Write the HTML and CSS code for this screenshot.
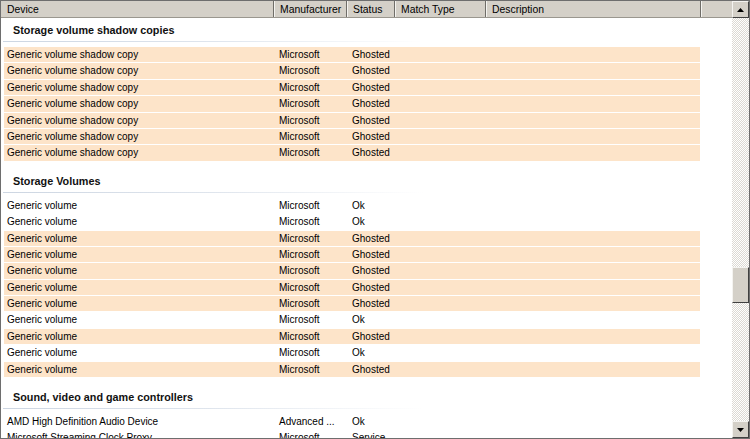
FILE: index.html
```html
<!DOCTYPE html>
<html>
<head>
<meta charset="utf-8">
<link rel="stylesheet" href="styles.css">
</head>
<body>
<div class="window">
  <div class="list">
    <div class="header">
      <div class="hcell">Device</div>
      <div class="hcell">Manufacturer</div>
      <div class="hcell">Status</div>
      <div class="hcell">Match Type</div>
      <div class="hcell">Description</div>
      <div class="hcell filler"></div>
    </div>
    <div class="body">
      <div class="group-head first"><div class="group-title">Storage volume shadow copies</div><div class="group-line"></div></div>
      <div class="row ghost"><span>Generic volume shadow copy</span><span>Microsoft</span><span>Ghosted</span><span></span><span></span></div>
      <div class="row ghost"><span>Generic volume shadow copy</span><span>Microsoft</span><span>Ghosted</span><span></span><span></span></div>
      <div class="row ghost"><span>Generic volume shadow copy</span><span>Microsoft</span><span>Ghosted</span><span></span><span></span></div>
      <div class="row ghost"><span>Generic volume shadow copy</span><span>Microsoft</span><span>Ghosted</span><span></span><span></span></div>
      <div class="row ghost"><span>Generic volume shadow copy</span><span>Microsoft</span><span>Ghosted</span><span></span><span></span></div>
      <div class="row ghost"><span>Generic volume shadow copy</span><span>Microsoft</span><span>Ghosted</span><span></span><span></span></div>
      <div class="row ghost"><span>Generic volume shadow copy</span><span>Microsoft</span><span>Ghosted</span><span></span><span></span></div>

      <div class="group-head"><div class="group-title">Storage Volumes</div><div class="group-line"></div></div>
      <div class="row"><span>Generic volume</span><span>Microsoft</span><span>Ok</span><span></span><span></span></div>
      <div class="row"><span>Generic volume</span><span>Microsoft</span><span>Ok</span><span></span><span></span></div>
      <div class="row ghost"><span>Generic volume</span><span>Microsoft</span><span>Ghosted</span><span></span><span></span></div>
      <div class="row ghost"><span>Generic volume</span><span>Microsoft</span><span>Ghosted</span><span></span><span></span></div>
      <div class="row ghost"><span>Generic volume</span><span>Microsoft</span><span>Ghosted</span><span></span><span></span></div>
      <div class="row ghost"><span>Generic volume</span><span>Microsoft</span><span>Ghosted</span><span></span><span></span></div>
      <div class="row ghost"><span>Generic volume</span><span>Microsoft</span><span>Ghosted</span><span></span><span></span></div>
      <div class="row"><span>Generic volume</span><span>Microsoft</span><span>Ok</span><span></span><span></span></div>
      <div class="row ghost"><span>Generic volume</span><span>Microsoft</span><span>Ghosted</span><span></span><span></span></div>
      <div class="row"><span>Generic volume</span><span>Microsoft</span><span>Ok</span><span></span><span></span></div>
      <div class="row ghost"><span>Generic volume</span><span>Microsoft</span><span>Ghosted</span><span></span><span></span></div>

      <div class="group-head"><div class="group-title">Sound, video and game controllers</div><div class="group-line"></div></div>
      <div class="row"><span>AMD High Definition Audio Device</span><span>Advanced ...</span><span>Ok</span><span></span><span></span></div>
      <div class="row"><span>Microsoft Streaming Clock Proxy</span><span>Microsoft</span><span>Service</span><span></span><span></span></div>
    </div>
  </div>
  <div class="scrollbar">
    <div class="sbtn"><svg width="7" height="4" viewBox="0 0 7 4"><path d="M3.5 0 L7 4 L0 4 Z" fill="#000"/></svg></div>
    <div class="track">
      <div class="thumb"></div>
    </div>
    <div class="sbtn"><svg width="7" height="4" viewBox="0 0 7 4"><path d="M0 0 L7 0 L3.5 4 Z" fill="#000"/></svg></div>
  </div>
</div>
</body>
</html>
```

FILE: styles.css
```css
html, body {
  margin: 0;
  padding: 0;
  background: #fff;
}

.window {
  width: 750px;
  height: 439px;
  box-sizing: border-box;
  border: 1px solid #6e6e6e;
  display: flex;
  overflow: hidden;
  font-family: "Liberation Sans", Arial, sans-serif;
  font-size: 10px;
  color: #000;
}

.list {
  flex: 1;
  display: flex;
  flex-direction: column;
  overflow: hidden;
  min-width: 0;
}

.header {
  display: grid;
  grid-template-columns: 273px 73px 48px 91px 215px 1fr;
  height: 17px;
  flex: none;
  background: #d4d0c8;
  border-bottom: 1px solid #9a978f;
  box-sizing: border-box;
}

.hcell {
  padding-left: 6px;
  padding-top: 1px;
  line-height: 16px;
  font-size: 10.4px;
  border-right: 1px solid #6f6d68;
  box-shadow: inset 1px 0 0 #f4f3f0;
  white-space: nowrap;
  overflow: hidden;
}

.hcell:first-child {
  box-shadow: none;
}

.hcell.filler {
  border-right: none;
}

.body {
  flex: 1;
  overflow: hidden;
}

.group-head {
  height: 36px;
  padding-top: 12px;
  box-sizing: border-box;
}

.group-head.first {
  height: 29px;
  padding-top: 5px;
}

.group-title {
  height: 14px;
  line-height: 14px;
  padding-left: 12px;
  font-weight: bold;
  font-size: 10.8px;
  color: #111;
  margin-bottom: 4px;
}

.group-line {
  height: 1px;
  margin-left: 2px;
  width: 420px;
  background: linear-gradient(to right, #cdd6e2 0%, #dfe5ed 50%, rgba(255,255,255,0) 100%);
}

.row {
  display: grid;
  grid-template-columns: 270px 73px 48px 91px 1fr;
  margin-left: 3px;
  width: 696px;
  height: 16.4px;
  box-sizing: border-box;
  border-bottom: 1px solid #fff;
  line-height: 16.4px;
  white-space: nowrap;
}

.row.ghost {
  background: #fde4c9;
}

.row span {
  padding-left: 5px;
  overflow: hidden;
}

.row span:first-child {
  padding-left: 3px;
}

.scrollbar {
  width: 17px;
  flex: none;
  display: flex;
  flex-direction: column;
}

.sbtn {
  height: 17px;
  flex: none;
  box-sizing: border-box;
  background: #d4d0c8;
  border-top: 1px solid #f4f3f0;
  border-left: 1px solid #f4f3f0;
  border-right: 1px solid #404040;
  border-bottom: 1px solid #404040;
  display: flex;
  align-items: center;
  justify-content: center;
}

.track {
  flex: 1;
  background-color: #fff;
  background-image: repeating-conic-gradient(#dcd9d3 0 25%, #ffffff 0 50%);
  background-size: 2px 2px;
  padding-top: 249px;
}

.thumb {
  height: 36px;
  box-sizing: border-box;
  background: #d4d0c8;
  border-top: 1px solid #f4f3f0;
  border-left: 1px solid #f4f3f0;
  border-right: 1px solid #404040;
  border-bottom: 1px solid #404040;
}
```
